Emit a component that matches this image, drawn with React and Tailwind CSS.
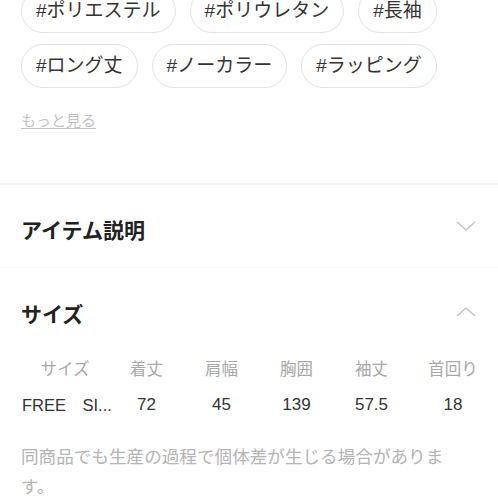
import React from 'react'

const tags = [
    '#ポリエステル',
    '#ポリウレタン',
    '#長袖',
    '#ロング丈',
    '#ノーカラー',
    '#ラッピング',
]

const headers = ['サイズ', '着丈', '肩幅', '胸囲', '袖丈', '首回り']
const values = ['72', '45', '139', '57.5', '18']

const Chevron = ({ up }) => (
    <svg width="20" height="10" viewBox="0 0 20 10" className="shrink-0">
        <polyline
            points={up ? '1,9 10,1 19,9' : '1,1 10,9 19,1'}
            fill="none"
            stroke="#c4c4c4"
            strokeWidth="1.5"
            strokeLinejoin="round"
        />
    </svg>
)

const App = () => {
    return (
        <div
            className="w-[498px] h-[498px] overflow-hidden bg-white"
            style={{ fontFamily: '"Liberation Sans", "Noto Sans CJK JP", sans-serif' }}
        >
            {/* Tags */}
            <div className="mt-[-11px] px-[21px] flex flex-wrap gap-x-[14px] gap-y-[11px]">
                {tags.map(tag => (
                    <span
                        key={tag}
                        className="h-[44px] px-[14px] flex items-center rounded-full border border-[#e3e3e3] text-[19px] text-[#333] whitespace-nowrap"
                    >
                        {tag}
                    </span>
                ))}
            </div>

            <div className="mt-[21px] px-[21px]">
                <span className="text-[15px] leading-[22px] text-[#c2c2c2] underline underline-offset-2">もっと見る</span>
            </div>

            <div className="mt-[50px] h-[2px] bg-[#f3f3f3]"></div>

            {/* Item description */}
            <div className="pt-[32px] pb-[22px] px-[21px] flex items-start justify-between">
                <h2 className="text-[21px] leading-[28px] font-bold text-[#222]">アイテム説明</h2>
                <div className="mt-[4px] mr-[1px]">
                    <Chevron />
                </div>
            </div>

            <div className="h-px bg-[#fafafa]"></div>

            {/* Size */}
            <div className="pt-[33px] px-[21px] flex items-start justify-between">
                <h2 className="text-[21px] leading-[28px] font-bold text-[#222]">サイズ</h2>
                <div className="mt-[6px] mr-[1px]">
                    <Chevron up />
                </div>
            </div>

            <div className="mt-[28px] pl-[21px] grid grid-cols-[88px_75px_75px_75px_75px_88px] gap-y-[12px]">
                {headers.map(h => (
                    <div key={h} className="text-center text-[16.5px] leading-[24px] text-[#a8a8a8]">{h}</div>
                ))}
                <div className="text-[16.5px] leading-[24px] text-[#333] whitespace-nowrap pl-[1px]">FREE{'\u3000'}SI...</div>
                {values.map((v, i) => (
                    <div key={i} className="text-center text-[17px] leading-[24px] text-[#333]">{v}</div>
                ))}
            </div>

            <p className="mt-[25px] px-[21px] text-[17.6px] leading-[30px] text-[#b4b4b4]">
                同商品でも生産の過程で個体差が生じる場合がありま<br />す。
            </p>
        </div>
    )
}

export default App
